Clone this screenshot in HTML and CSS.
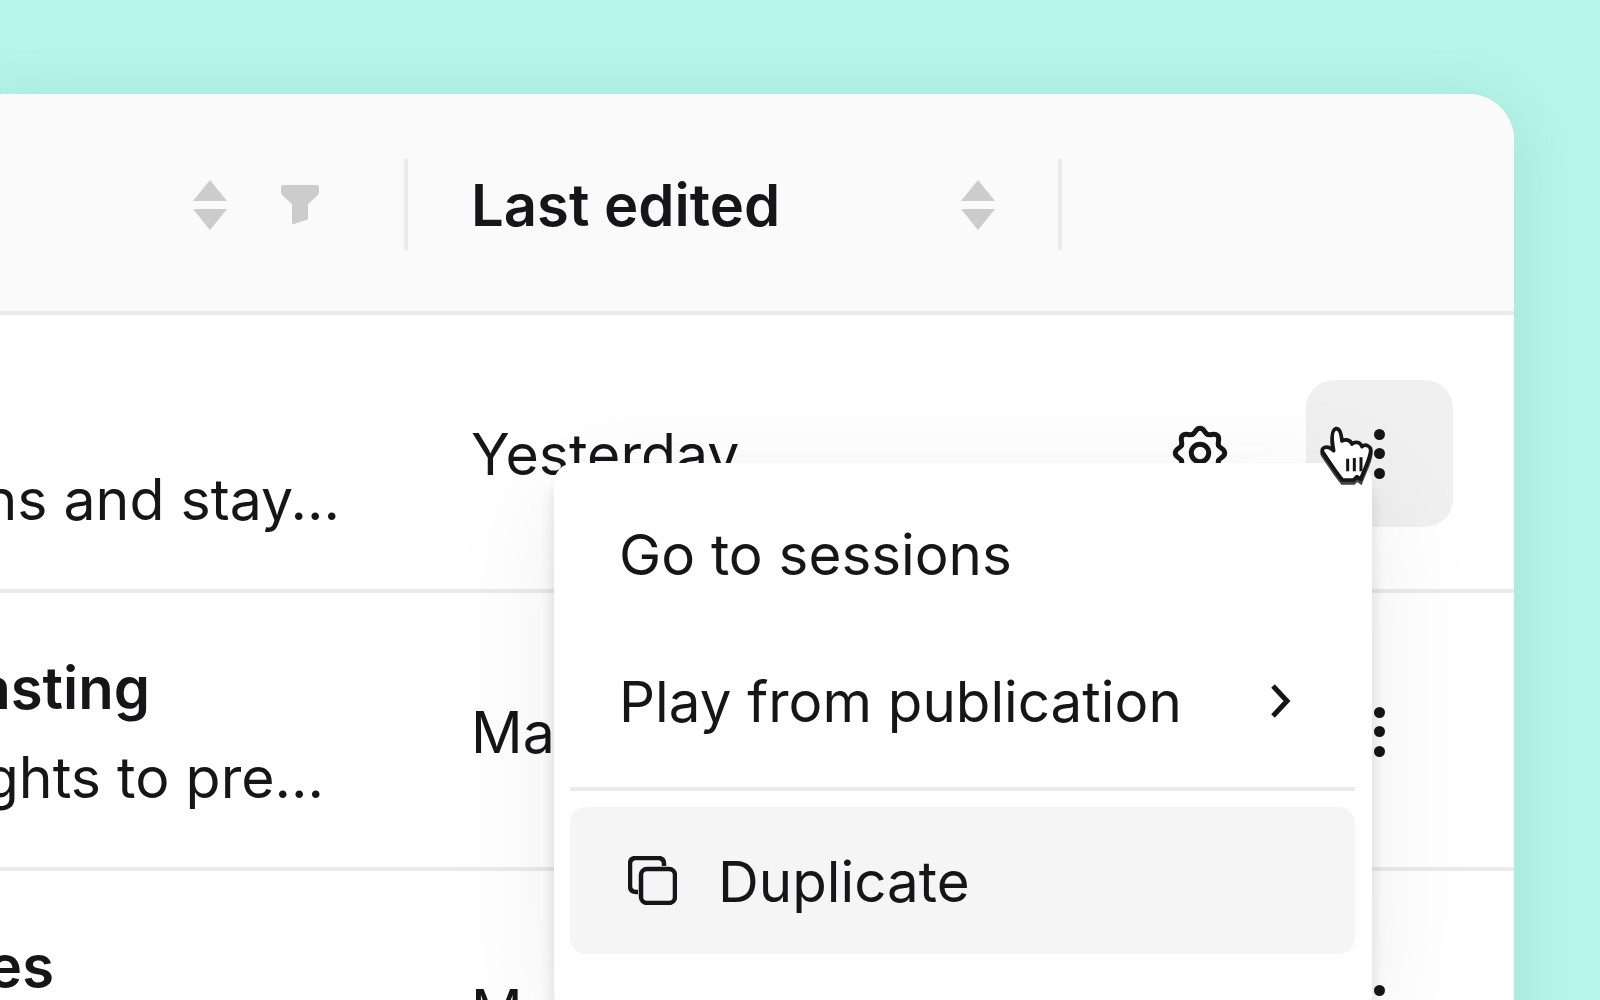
FILE: index.html
```html
<!DOCTYPE html>
<html lang="en">
<head>
<meta charset="utf-8">
<title>Studies table</title>
<link rel="stylesheet" href="styles.css">
</head>
<body>
<main class="card">
  <div class="head">
    <div class="head-name">
      <svg class="sort" viewBox="0 0 34 50"><path d="M17 0 34 21H0ZM0 29H34L17 50Z"/></svg>
      <svg class="filter" viewBox="0 0 38 40"><path d="M2 0H36Q38 0 38 2V7Q38 9 36 11L27 19V34.5L11 39.5V19L2 11Q0 9 0 7V2Q0 0 2 0Z"/></svg>
    </div>
    <span class="head-rule"></span>
    <div class="head-date">
      <span class="head-title">Last edited</span>
      <svg class="sort" viewBox="0 0 34 50"><path d="M17 0 34 21H0ZM0 29H34L17 50Z"/></svg>
    </div>
    <span class="head-rule"></span>
  </div>

  <div class="row">
    <div class="name">
      <span class="title title-empty">&nbsp;</span>
      <span class="desc desc-a">Review sessions and stay...</span>
    </div>
    <div class="date">Yesterday</div>
    <div class="actions">
      <button class="icon-btn" type="button">
        <svg class="gear" viewBox="-28 -28 56 56">
          <defs><path id="lobe" d="M-7.65-18.48C-4.4-19.8-4.5-24.7 0-24.7S4.4-19.8 7.65-18.48"/></defs>
          <use href="#lobe"/>
          <use href="#lobe" transform="rotate(45)"/>
          <use href="#lobe" transform="rotate(90)"/>
          <use href="#lobe" transform="rotate(135)"/>
          <use href="#lobe" transform="rotate(180)"/>
          <use href="#lobe" transform="rotate(225)"/>
          <use href="#lobe" transform="rotate(270)"/>
          <use href="#lobe" transform="rotate(315)"/>
          <circle r="8.7"/>
        </svg>
      </button>
      <button class="icon-btn is-hover" type="button"><span class="dots"><i></i><i></i><i></i></span></button>
    </div>
  </div>

  <div class="row">
    <div class="name">
      <span class="title title-b">Forecasting</span>
      <span class="desc desc-b">Use insights to pre...</span>
    </div>
    <div class="date">May 12</div>
    <div class="actions">
      <button class="icon-btn" type="button"></button>
      <button class="icon-btn" type="button"><span class="dots"><i></i><i></i><i></i></span></button>
    </div>
  </div>

  <div class="row">
    <div class="name">
      <span class="title title-c">Interviews and notes</span>
      <span class="desc desc-b">Collect feedback and...</span>
    </div>
    <div class="date">May 3</div>
    <div class="actions">
      <button class="icon-btn" type="button"></button>
      <button class="icon-btn" type="button"><span class="dots"><i></i><i></i><i></i></span></button>
    </div>
  </div>
</main>

<div class="menu">
  <div class="item"><span class="item-label">Go to sessions</span></div>
  <div class="item item-sub">
    <span class="item-label">Play from publication</span>
    <svg class="chev" viewBox="0 0 24 36"><path d="M4 3 18 18 4 33"/></svg>
  </div>
  <div class="menu-rule"></div>
  <div class="item item-active">
    <svg class="copy" viewBox="0 0 49 49"><path d="M10 36H8Q2 36 2 30V8Q2 2 8 2H30Q36 2 36 8V10"/><rect x="13" y="13" width="34" height="34" rx="6"/></svg>
    <span class="item-label">Duplicate</span>
  </div>
</div>

<svg class="cursor" viewBox="0 0 360 300">
  <path class="cursor-shadow" d="M167 94C179 92 183 106 186 131C197 124 211 128 216 140C227 130 242 136 246 148C257 138 275 148 272 162C269 188 253 216 242 246L231 238L221 248L187 248C167 224 147 192 129 166C119 152 141 140 161 160C157 138 151 100 167 94Z"/>
  <path class="cursor-hand" d="M167 86C179 84 183 98 186 123C197 116 211 120 216 132C227 122 242 128 246 140C257 130 275 140 272 154C269 180 253 208 242 238L231 230L221 240L187 240C167 216 147 184 129 158C119 144 141 132 161 152C157 130 151 92 167 86Z"/>
  <path class="cursor-lines" d="M203 176V214M223 174V214M243 172V214"/>
</svg>
</body>
</html>
```
FILE: styles.css
```css
* { box-sizing: border-box; }

html, body { margin: 0; height: 100%; }

body {
  position: relative;
  height: 1000px;
  overflow: hidden;
  background: #b6f5ea;
  color: #161618;
  font-family: Inter, "Liberation Sans", sans-serif;
  font-size: 57.2px;
}

.card {
  width: 1554px;
  height: 1000px;
  margin: 94px 0 0 -40px;
  border-radius: 46px;
  background: #fff;
  box-shadow: 0 8px 60px rgba(0, 90, 70, 0.12);
}

.head {
  display: flex;
  align-items: center;
  height: 221px;
  padding-top: 4px;
  border-bottom: 4px solid #ebebeb;
  border-radius: 46px 46px 0 0;
  background: #fafafa;
}

.head-name {
  display: flex;
  align-items: center;
  justify-content: flex-end;
  gap: 54px;
  width: 444px;
  padding-right: 85px;
}

.head-rule {
  width: 4px;
  height: 91px;
  background: #ebebeb;
}

.head-date {
  display: flex;
  align-items: center;
  justify-content: space-between;
  width: 650px;
  padding: 0 63px;
}

.head-title { font-size: 58px; font-weight: 600; }

.sort { width: 34px; height: 50px; fill: #ccc; }
.filter { width: 38px; height: 40px; fill: #ccc; }

.row {
  display: flex;
  align-items: center;
  height: 278px;
  padding-top: 3px;
  border-bottom: 4px solid #ebebeb;
}

.name {
  display: flex;
  flex-direction: column;
  align-items: flex-end;
  flex: none;
  width: 511px;
  padding-top: 2px;
  line-height: 89px;
  white-space: nowrap;
}

.title { font-size: 58px; font-weight: 600; }
.title-empty { align-self: flex-start; }
.title-b { margin-right: 321px; }
.title-c { margin-right: 417px; }
.desc-a { margin-right: 131px; }
.desc-b { margin-right: 147px; }

.date {
  flex: 1;
  padding-top: 2px;
  white-space: nowrap;
}

.actions {
  display: flex;
  gap: 33px;
  margin-right: 61px;
}

.icon-btn {
  display: flex;
  align-items: center;
  justify-content: center;
  width: 147px;
  height: 147px;
  padding: 0;
  border: 0;
  border-radius: 28px;
  background: transparent;
  color: inherit;
}

.icon-btn.is-hover { background: #f0f0f0; }

.gear {
  width: 56px;
  height: 56px;
  margin-top: -2px;
  fill: none;
  stroke: #161618;
  stroke-width: 5;
  stroke-linejoin: round;
  stroke-linecap: round;
}

.dots {
  display: flex;
  flex-direction: column;
  gap: 8.5px;
}

.dots i {
  display: block;
  width: 11px;
  height: 11px;
  border-radius: 50%;
  background: #161618;
}

.menu {
  position: absolute;
  top: 463px;
  left: 554px;
  width: 818px;
  padding: 16px 17px 60px 16px;
  border-radius: 20px;
  background: #fff;
  font-size: 56.5px;
  box-shadow: 0 20px 12px 4px rgba(0, 0, 0, 0.08), 0 24px 120px rgba(0, 0, 0, 0.07);
}

.item {
  display: flex;
  align-items: center;
  height: 147px;
  padding: 0 49px;
  border-radius: 16px;
  white-space: nowrap;
}

.item-label { padding-top: 4px; }

.item-sub { justify-content: space-between; padding-right: 62px; }

.item-active {
  gap: 41px;
  padding-left: 58px;
  background: #f5f5f5;
}

.item-active .item-label { padding-top: 2px; }

.menu-rule {
  height: 4px;
  margin: 14px 0 16px;
  background: #ebebeb;
}

.chev {
  width: 24px;
  height: 36px;
  margin-top: 2px;
  fill: none;
  stroke: #161618;
  stroke-width: 5;
}

.copy {
  width: 49px;
  height: 49px;
  fill: none;
  stroke: #161618;
  stroke-width: 4.5;
}

.cursor {
  position: absolute;
  top: 400px;
  left: 1280px;
  width: 120px;
  height: 100px;
}

.cursor-shadow { fill: #161618; stroke: #161618; stroke-width: 12; opacity: 0.8; }
.cursor-hand { fill: #fff; stroke: #161618; stroke-width: 11; stroke-linejoin: round; }
.cursor-lines { fill: none; stroke: #161618; stroke-width: 9; }
```
